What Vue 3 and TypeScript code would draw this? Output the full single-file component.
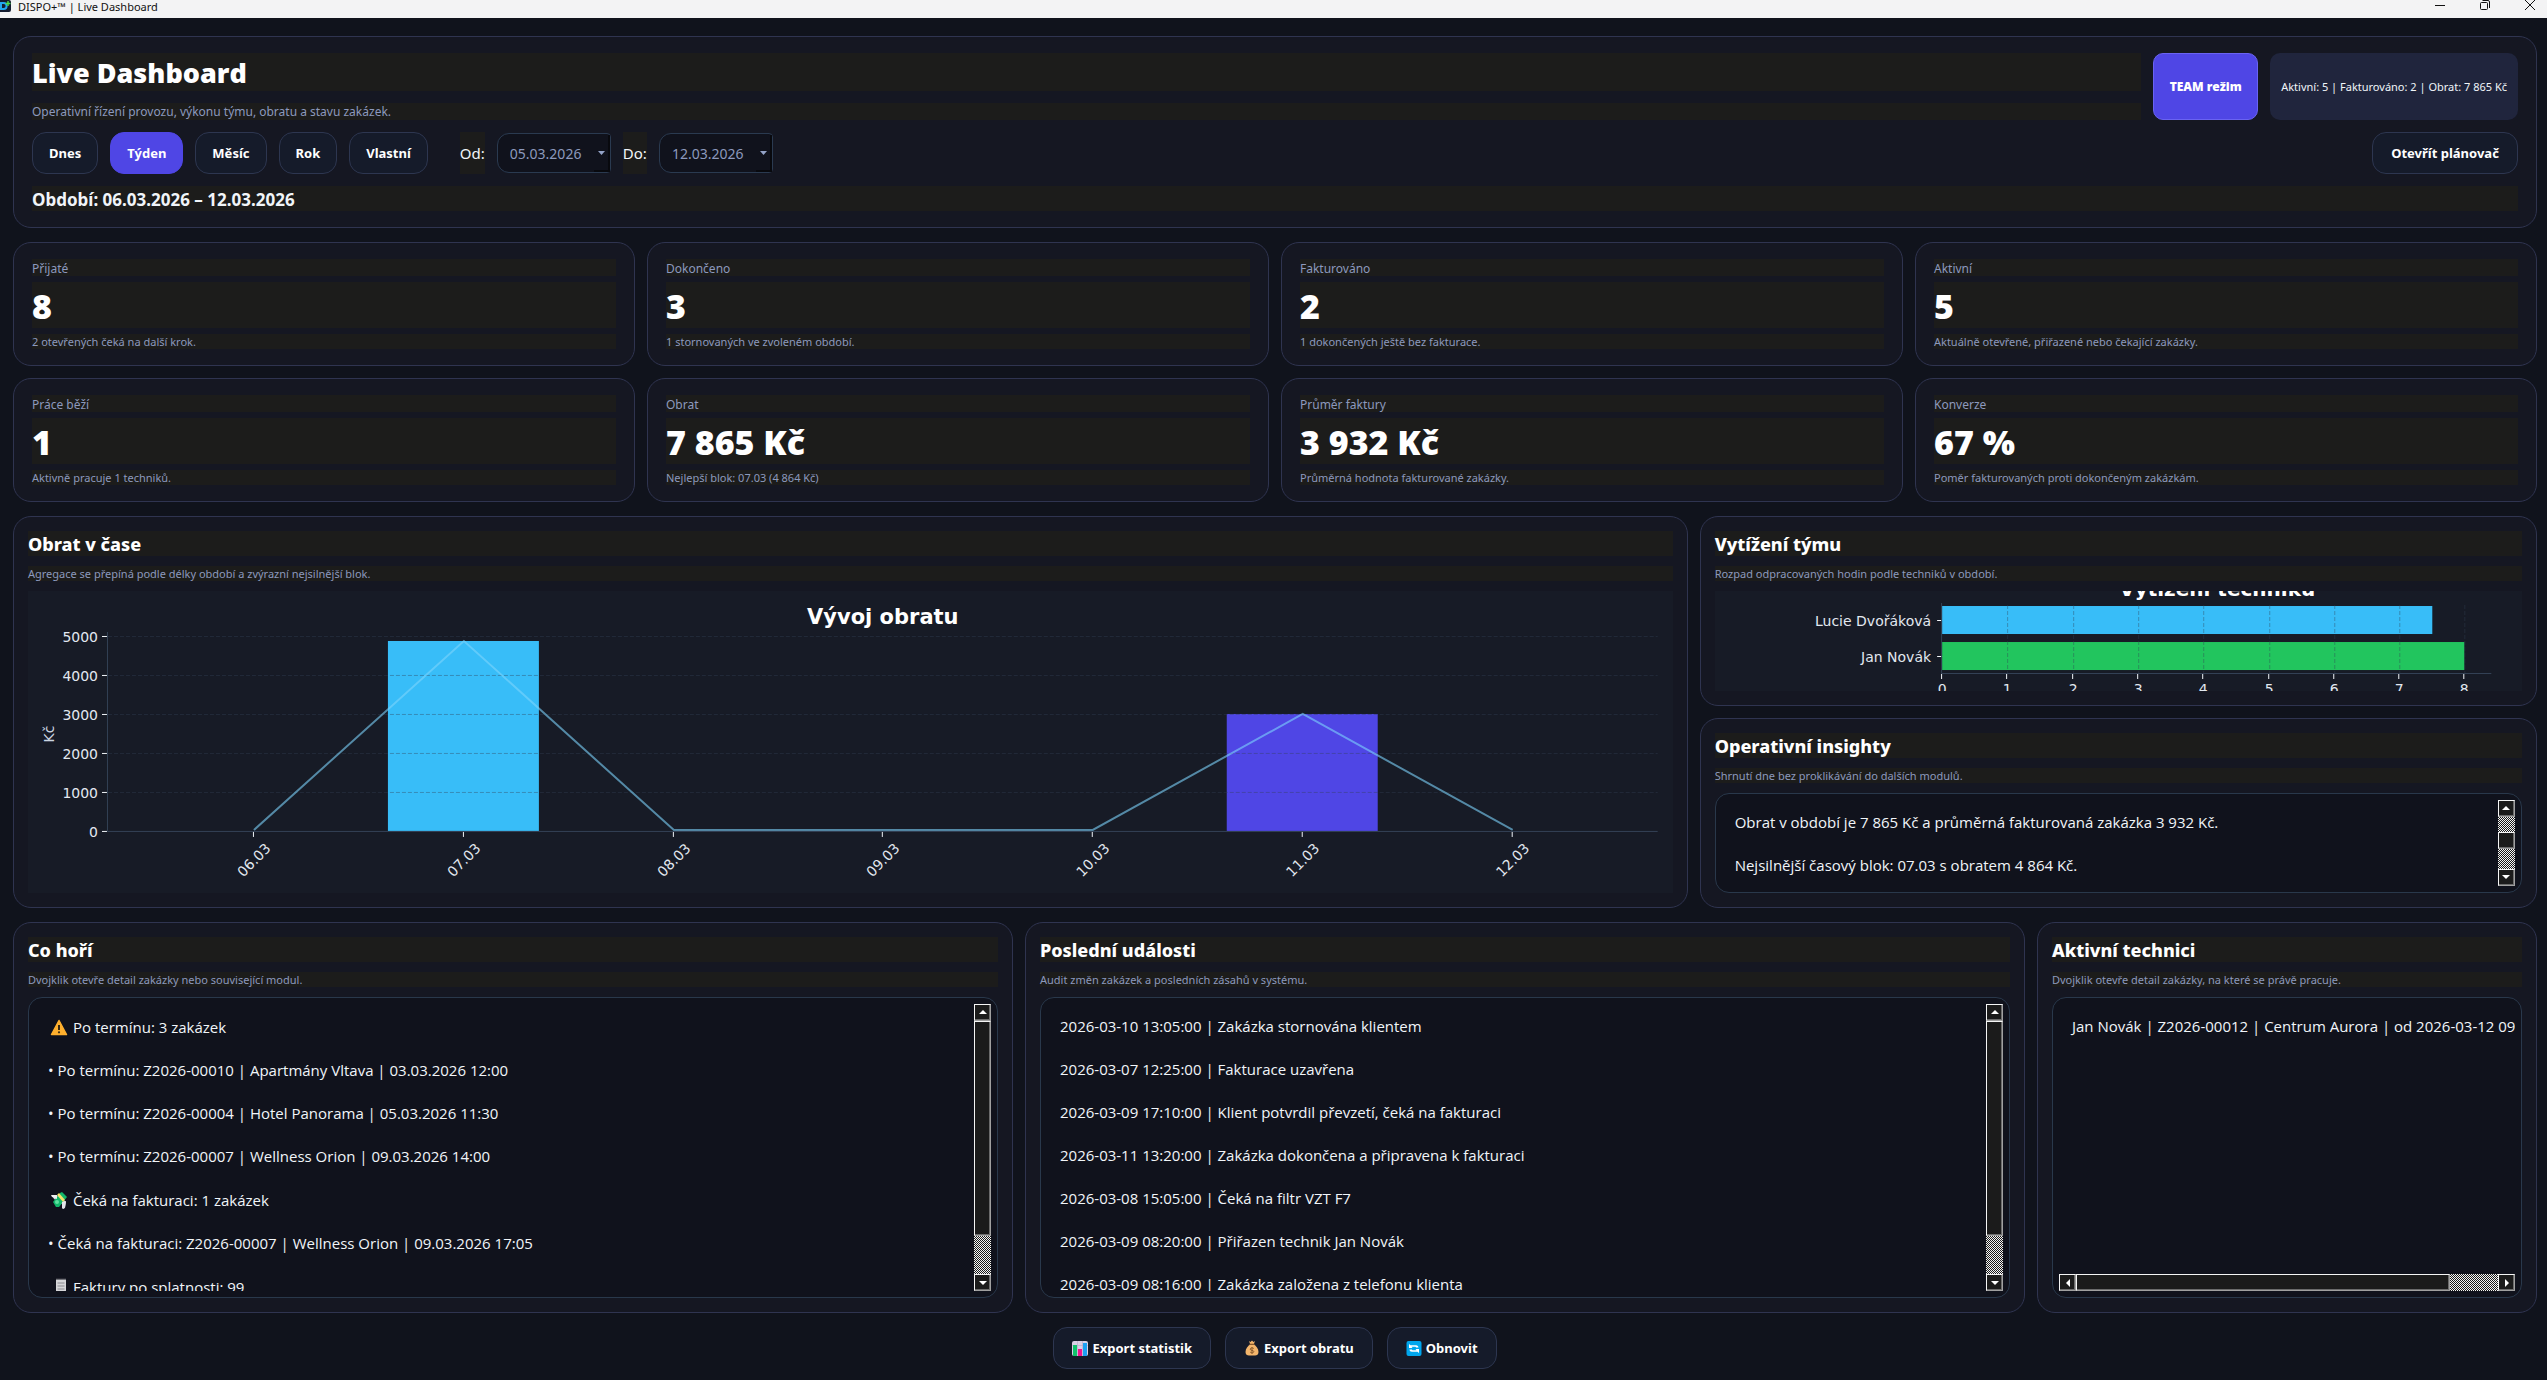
<script setup lang="ts">
import { ref } from 'vue'

interface Kpi {
  label: string
  value: string
  note: string
}

interface FireItem {
  icon?: 'warning' | 'money' | 'receipt'
  text: string
}

const ranges = ['Dnes', 'Týden', 'Měsíc', 'Rok', 'Vlastní']
const activeRange = ref('Týden')
const dateFrom = ref('05.03.2026')
const dateTo = ref('12.03.2026')

const kpis: Kpi[] = [
  { label: 'Přijaté', value: '8', note: '2 otevřených čeká na další krok.' },
  { label: 'Dokončeno', value: '3', note: '1 stornovaných ve zvoleném období.' },
  { label: 'Fakturováno', value: '2', note: '1 dokončených ještě bez fakturace.' },
  { label: 'Aktivní', value: '5', note: 'Aktuálně otevřené, přiřazené nebo čekající zakázky.' },
  { label: 'Práce běží', value: '1', note: 'Aktivně pracuje 1 techniků.' },
  { label: 'Obrat', value: '7 865 Kč', note: 'Nejlepší blok: 07.03 (4 864 Kč)' },
  { label: 'Průměr faktury', value: '3 932 Kč', note: 'Průměrná hodnota fakturované zakázky.' },
  { label: 'Konverze', value: '67 %', note: 'Poměr fakturovaných proti dokončeným zakázkám.' },
]

const insights = [
  'Obrat v období je 7 865 Kč a průměrná fakturovaná zakázka 3 932 Kč.',
  'Nejsilnější časový blok: 07.03 s obratem 4 864 Kč.',
]

const fires: FireItem[] = [
  { icon: 'warning', text: 'Po termínu: 3 zakázek' },
  { text: '• Po termínu: Z2026-00010 | Apartmány Vltava | 03.03.2026 12:00' },
  { text: '• Po termínu: Z2026-00004 | Hotel Panorama | 05.03.2026 11:30' },
  { text: '• Po termínu: Z2026-00007 | Wellness Orion | 09.03.2026 14:00' },
  { icon: 'money', text: 'Čeká na fakturaci: 1 zakázek' },
  { text: '• Čeká na fakturaci: Z2026-00007 | Wellness Orion | 09.03.2026 17:05' },
  { icon: 'receipt', text: 'Faktury po splatnosti: 99' },
]

const events = [
  '2026-03-10 13:05:00 | Zakázka stornována klientem',
  '2026-03-07 12:25:00 | Fakturace uzavřena',
  '2026-03-09 17:10:00 | Klient potvrdil převzetí, čeká na fakturaci',
  '2026-03-11 13:20:00 | Zakázka dokončena a připravena k fakturaci',
  '2026-03-08 15:05:00 | Čeká na filtr VZT F7',
  '2026-03-09 08:20:00 | Přiřazen technik Jan Novák',
  '2026-03-09 08:16:00 | Zakázka založena z telefonu klienta',
]

const technicians = ['Jan Novák | Z2026-00012 | Centrum Aurora | od 2026-03-12 09:05']

// Revenue chart: 39 units of height per 1000 Kč, 210 units per day.
const revenue = [
  { day: '06.03', value: 0, color: '#4f46e5' },
  { day: '07.03', value: 4864, color: '#38bdf8' },
  { day: '08.03', value: 0, color: '#4f46e5' },
  { day: '09.03', value: 0, color: '#4f46e5' },
  { day: '10.03', value: 0, color: '#4f46e5' },
  { day: '11.03', value: 3001, color: '#4f46e5' },
  { day: '12.03', value: 0, color: '#4f46e5' },
]
const yTicks = [0, 1000, 2000, 3000, 4000, 5000]
const dayX = (i: number) => Math.round(226 + i * 209.8)
const moneyY = (v: number) => Math.round(240 - v * 0.039)
const revenueLine = revenue.map((r, i) => `${dayX(i)},${moneyY(r.value) - (r.value ? 0 : 1)}`).join(' ')

// Team chart: hours on the horizontal axis.
const hourX = (h: number) => Math.round(227 + h * 65.3)
const team = [
  { name: 'Lucie Dvořáková', hours: 7.5, y: 15, color: '#38bdf8' },
  { name: 'Jan Novák', hours: 8, y: 51, color: '#22c55e' },
]
const hourTicks = [0, 1, 2, 3, 4, 5, 6, 7, 8]
</script>

<template>
  <div class="window">
    <header class="titlebar">
      <svg class="app-icon" width="11" height="13" viewBox="0 0 11 13" aria-hidden="true">
        <path d="M0 0h9a2 2 0 0 1 2 2v8a2 2 0 0 1-2 2H0z" fill="#141c30" />
        <path d="M1 3h2.600a3 3 0 0 1 0 6H1z" fill="none" stroke="#22a7f0" stroke-width="2" />
        <path d="M8 1v5M5.500 3.500h5" stroke="#4ade4a" stroke-width="1.400" />
      </svg>
      <span class="app-name">DISPO+™ | Live Dashboard</span>
      <div class="window-controls">
        <button type="button" aria-label="Minimalizovat">
          <svg width="12" height="12" viewBox="0 0 12 12"><path d="M1 5.500h10" stroke="#111" /></svg>
        </button>
        <button type="button" aria-label="Obnovit okno">
          <svg width="12" height="12" viewBox="0 0 12 12" fill="none" stroke="#111">
            <rect x="1.500" y="2.500" width="7" height="7" rx="1" />
            <path d="M3.500 0.500H9a1.500 1.500 0 0 1 1.500 1.500v6" />
          </svg>
        </button>
        <button type="button" aria-label="Zavřít">
          <svg width="12" height="12" viewBox="0 0 12 12"><path d="M1 0l10 10M11 0L1 10" stroke="#111" /></svg>
        </button>
      </div>
    </header>

    <main class="page">
      <section class="card hero">
        <div class="hero-top">
          <div class="hero-titles">
            <h1 class="strip">Live Dashboard</h1>
            <p class="strip hero-sub">Operativní řízení provozu, výkonu týmu, obratu a stavu zakázek.</p>
          </div>
          <button type="button" class="team-btn">TEAM režim</button>
          <div class="pill">Aktivní: 5 | Fakturováno: 2 | Obrat: 7 865 Kč</div>
        </div>
        <div class="hero-row">
          <button
            v-for="r in ranges"
            :key="r"
            type="button"
            class="btn range"
            :class="{ active: r === activeRange }"
            @click="activeRange = r"
          >{{ r }}</button>
          <label class="strip date-label first" for="date-from">Od:</label>
          <span class="combo">
            <select id="date-from" v-model="dateFrom"><option>05.03.2026</option></select>
            <svg width="9" height="5" viewBox="0 0 9 5" aria-hidden="true"><path d="M1 0h7L4.500 4z" fill="#94a3c8" /></svg>
          </span>
          <label class="strip date-label" for="date-to">Do:</label>
          <span class="combo">
            <select id="date-to" v-model="dateTo"><option>12.03.2026</option></select>
            <svg width="9" height="5" viewBox="0 0 9 5" aria-hidden="true"><path d="M1 0h7L4.500 4z" fill="#94a3c8" /></svg>
          </span>
          <button type="button" class="btn planner">Otevřít plánovač</button>
        </div>
        <p class="strip period">Období: 06.03.2026 – 12.03.2026</p>
      </section>

      <section class="kpis">
        <article v-for="k in kpis" :key="k.label" class="card kpi">
          <h2 class="strip kpi-label">{{ k.label }}</h2>
          <p class="strip kpi-value">{{ k.value }}</p>
          <p class="strip kpi-note">{{ k.note }}</p>
        </article>
      </section>

      <section class="charts">
        <article class="card panel">
          <h2 class="strip panel-title">Obrat v čase</h2>
          <p class="strip panel-sub">Agregace se přepíná podle délky období a zvýrazní nejsilnější blok.</p>
          <div class="plot">
            <svg viewBox="0 0 1645 300" preserveAspectRatio="xMinYMin meet" role="img" aria-label="Vývoj obratu">
              <text class="plot-title large" x="855" y="33" text-anchor="middle">Vývoj obratu</text>
              <text class="axis-label" x="21" y="143" text-anchor="middle" dominant-baseline="central" transform="rotate(-90 21 143)">Kč</text>
              <template v-for="(r, i) in revenue" :key="r.day">
                <rect
                  v-if="r.value"
                  :x="dayX(i) - 76"
                  :y="moneyY(r.value)"
                  width="151"
                  :height="240 - moneyY(r.value)"
                  :fill="r.color"
                />
              </template>
              <g v-for="t in yTicks" :key="t">
                <path v-if="t" class="grid" :d="`M80 ${moneyY(t) + 0.5}H1630`" />
                <path class="tick" :d="`M74 ${moneyY(t) + 0.5}h5`" />
                <text class="tick-label" x="70" :y="moneyY(t) + 6" text-anchor="end">{{ t }}</text>
              </g>
              <polyline :points="revenueLine" class="trend" />
              <path class="axis" d="M79.500 41V240.500H1630" />
              <g v-for="(r, i) in revenue" :key="r.day">
                <path class="tick" :d="`M${dayX(i) - 0.5} 241v5`" />
                <text
                  class="tick-label"
                  :x="dayX(i)"
                  y="269"
                  text-anchor="middle"
                  dominant-baseline="central"
                  :transform="`rotate(-45 ${dayX(i)} 269)`"
                >{{ r.day }}</text>
              </g>
            </svg>
          </div>
        </article>

        <div class="side">
          <article class="card panel">
            <h2 class="strip panel-title">Vytížení týmu</h2>
            <p class="strip panel-sub">Rozpad odpracovaných hodin podle techniků v období.</p>
            <div class="plot">
              <svg viewBox="0 0 807 98" preserveAspectRatio="xMinYMin meet" role="img" aria-label="Vytížení techniků">
                <text class="plot-title" x="502" y="5" text-anchor="middle">Vytížení techniků</text>
                <g v-for="m in team" :key="m.name">
                  <rect x="227" :y="m.y" :width="hourX(m.hours) - 227" height="28" :fill="m.color" />
                  <path class="tick" :d="`M222 ${m.y + 14.5}h5`" />
                  <text class="tick-label" x="216" :y="m.y + 20" text-anchor="end">{{ m.name }}</text>
                </g>
                <g v-for="h in hourTicks" :key="h">
                  <path v-if="h" class="grid" :d="`M${hourX(h) + 0.5} 14V82`" />
                  <path class="tick" :d="`M${hourX(h) - 0.5} 83v5`" />
                  <text class="tick-label" :x="hourX(h)" y="103" text-anchor="middle">{{ h }}</text>
                </g>
                <path class="axis" d="M226.500 12V82.500H776" />
              </svg>
            </div>
          </article>

          <article class="card panel">
            <h2 class="strip panel-title">Operativní insighty</h2>
            <p class="strip panel-sub">Shrnutí dne bez proklikávání do dalších modulů.</p>
            <div class="list">
              <ul>
                <li v-for="t in insights" :key="t">{{ t }}</li>
              </ul>
              <div class="scroll">
                <button type="button" class="arrow" aria-label="Nahoru"><i class="up"></i></button>
                <span class="track insights-lead"></span>
                <span class="thumb insights-thumb"></span>
                <span class="track grow"></span>
                <button type="button" class="arrow" aria-label="Dolů"><i class="down"></i></button>
              </div>
            </div>
          </article>
        </div>
      </section>

      <section class="lists">
        <article class="card panel">
          <h2 class="strip panel-title">Co hoří</h2>
          <p class="strip panel-sub">Dvojklik otevře detail zakázky nebo související modul.</p>
          <div class="list">
            <ul>
              <li v-for="f in fires" :key="f.text" :class="{ flagged: f.icon }">
                <svg v-if="f.icon === 'warning'" width="20" height="18" viewBox="0 0 20 18" aria-hidden="true">
                  <path d="M10 2.500L17.500 16.500h-15z" fill="#ffb02e" stroke="#ffb02e" stroke-width="1.500" stroke-linejoin="round" />
                  <path d="M10 7v5" stroke="#3a2a10" stroke-width="2" />
                  <circle cx="10" cy="14.300" r="1.100" fill="#3a2a10" />
                </svg>
                <svg v-else-if="f.icon === 'money'" width="20" height="18" viewBox="0 0 20 18" aria-hidden="true">
                  <path d="M3 4l6 1 8 6-1 6-2 1-1-5-8-5z" fill="#d8d8de" />
                  <path d="M4 11l7-9 2-1 5 5-8 10-3 0z" fill="#12b76a" />
                  <path d="M8 4l6 7 2-2-6-7z" fill="#f5e06a" />
                  <circle cx="8" cy="11" r="2" fill="#5fe0a0" />
                  <path d="M2 4l6 0v4l-5-2z" fill="#efeff2" />
                  <path d="M13 11l4-1-1 6-2 2-1-1z" fill="#e4e4ea" />
                </svg>
                <svg v-else-if="f.icon === 'receipt'" width="20" height="18" viewBox="0 0 20 18" aria-hidden="true">
                  <path d="M7 1.500h10V18H7z" fill="#d5d5d8" />
                  <path d="M7.500 1h9.500" stroke="#77777c" stroke-dasharray="1 1" />
                  <path d="M8.500 5h7M8.500 8h7M8.500 11h7M8.500 14h7" stroke="#8a8a90" />
                </svg>
                {{ f.text }}
              </li>
            </ul>
            <div class="scroll">
              <button type="button" class="arrow" aria-label="Nahoru"><i class="up"></i></button>
              <span class="thumb grow"></span>
              <span class="track tall-tail"></span>
              <button type="button" class="arrow" aria-label="Dolů"><i class="down"></i></button>
            </div>
          </div>
        </article>

        <article class="card panel">
          <h2 class="strip panel-title">Poslední události</h2>
          <p class="strip panel-sub">Audit změn zakázek a posledních zásahů v systému.</p>
          <div class="list">
            <ul>
              <li v-for="e in events" :key="e">{{ e }}</li>
            </ul>
            <div class="scroll">
              <button type="button" class="arrow" aria-label="Nahoru"><i class="up"></i></button>
              <span class="thumb grow"></span>
              <span class="track tall-tail"></span>
              <button type="button" class="arrow" aria-label="Dolů"><i class="down"></i></button>
            </div>
          </div>
        </article>

        <article class="card panel">
          <h2 class="strip panel-title">Aktivní technici</h2>
          <p class="strip panel-sub">Dvojklik otevře detail zakázky, na které se právě pracuje.</p>
          <div class="list stacked">
            <ul>
              <li v-for="t in technicians" :key="t">{{ t }}</li>
            </ul>
            <div class="scroll horizontal">
              <button type="button" class="arrow" aria-label="Vlevo"><i class="left"></i></button>
              <span class="thumb grow"></span>
              <span class="track wide-tail"></span>
              <button type="button" class="arrow" aria-label="Vpravo"><i class="right"></i></button>
            </div>
          </div>
        </article>
      </section>

      <footer class="actions">
        <button type="button" class="btn action">
          <svg width="16" height="16" viewBox="0 0 16 16" aria-hidden="true">
            <rect x="0" y="1" width="16" height="15" rx="2" fill="#d9d0e6" />
            <path d="M5.500 1v15M10.500 1v15M0 5.500h16" stroke="#b5a8c8" stroke-width="0.600" />
            <path d="M1 5h4v11H1z" fill="#10c26c" />
            <path d="M6 9h4v7H6z" fill="#f0148c" />
            <path d="M11 3h4v13h-4z" fill="#1ca0f2" />
          </svg>
          Export statistik
        </button>
        <button type="button" class="btn action">
          <svg width="16" height="16" viewBox="0 0 16 16" aria-hidden="true">
            <path d="M5 1l1.500 1L8 0.500 9.500 2 11 1 9.800 4.200H6.200z" fill="#f3b56b" />
            <path d="M6 4.500h4c2 1.500 4.500 4 4.500 7.500 0 2.500-1.500 3.500-3.500 3.500H5c-2 0-3.500-1-3.500-3.500C1.500 8.500 4 6 6 4.500z" fill="#f3b56b" />
            <path d="M5.500 4.300h5" stroke="#8a5a2b" stroke-width="1.200" />
            <path d="M9.800 8.500c-1-1-3.600-.8-3.600.7 0 1.600 3.600.8 3.600 2.400 0 1.400-2.600 1.500-3.600.5M8 7v7" fill="none" stroke="#8a5a2b" />
          </svg>
          Export obratu
        </button>
        <button type="button" class="btn action">
          <svg width="16" height="16" viewBox="0 0 16 16" aria-hidden="true">
            <rect x="0.500" y="1" width="15" height="15" rx="2" fill="#00a6ed" />
            <path d="M3 6.500V4l1.500 1.200H10c1.500 0 2.500 1 2.500 2.300H10c0-.6-.4-.8-1-.8H5.500L6.500 8H3z" fill="#fff" />
            <path d="M13 10.500V13l-1.500-1.200H6c-1.500 0-2.500-1-2.500-2.300H6c0 .6.400.8 1 .8h3.500L9.500 9H13z" fill="#fff" />
          </svg>
          Obnovit
        </button>
      </footer>
    </main>
  </div>
</template>

<style>
body {
  margin: 0;
  background: #10131c;
}
</style>

<style scoped>
.window {
  display: flex;
  flex-direction: column;
  min-height: 100vh;
  background: #10131c;
  color: #f1f5f9;
  font-family: "Noto Sans", "Open Sans", sans-serif;
  font-size: 14px;
}

.window *,
.window *::before {
  box-sizing: border-box;
}

h1,
h2,
p,
ul {
  margin: 0;
  padding: 0;
}

button,
select {
  font-family: inherit;
  cursor: pointer;
}

h1,
.team-btn,
.kpi-value,
.list {
  font-family: "Open Sans", "Noto Sans", sans-serif;
}

.titlebar {
  display: flex;
  align-items: flex-start;
  height: 18px;
  background: #f3f3f4;
  color: #111;
  overflow: hidden;
}

.app-name {
  margin-left: 7px;
  font-size: 11px;
  line-height: 14px;
}

.window-controls {
  display: flex;
  gap: 33px;
  margin: 0 11px 0 auto;
}

.window-controls button {
  display: flex;
  padding: 0;
  border: 0;
  background: none;
}

.page {
  display: flex;
  flex: 1;
  flex-direction: column;
  gap: 14px;
  padding: 18px 10px 11px 13px;
}

.card {
  border: 1px solid #2f3450;
  border-radius: 18px;
  background: #151722;
}

.strip {
  background: #1c1c1b;
}

.hero {
  display: flex;
  flex-direction: column;
  gap: 12px;
  padding: 16px 18px;
}

.hero-top {
  display: flex;
  gap: 12px;
}

.hero-titles {
  display: flex;
  flex: 1;
  flex-direction: column;
  gap: 12px;
}

h1 {
  padding-top: 2px;
  font-size: 27px;
  font-weight: 800;
  line-height: 36px;
  color: #fff;
}

.hero-sub {
  padding-top: 1px;
  font-size: 12px;
  line-height: 16px;
  color: #8c99bd;
}

.team-btn {
  width: 105px;
  padding: 0;
  border: 1px solid #6a63f2;
  border-radius: 10px;
  background: #4f46e5;
  color: #fff;
  font-size: 12px;
  font-weight: 800;
}

.pill {
  display: flex;
  align-items: center;
  padding: 0 11px;
  border-radius: 10px;
  background: #20253d;
  font-size: 11px;
}

.hero-row {
  display: flex;
  gap: 12px;
  height: 42px;
}

.btn {
  border: 1px solid #2d3650;
  border-radius: 14px;
  background: #151b2a;
  color: #fff;
  font-size: 13px;
  font-weight: 700;
}

.range {
  padding: 0 16px;
}

.range.active {
  border-color: #4f46e5;
  background: #4f46e5;
}

.date-label {
  font-size: 15px;
  line-height: 42px;
}

.date-label.first {
  margin-left: 20px;
}

.combo {
  position: relative;
  display: flex;
  width: 114px;
  height: 40px;
  margin-top: 1px;
}

.combo select {
  width: 100%;
  padding: 0 12px;
  border: 1px solid #2a3a50;
  border-radius: 12px 4px 4px 12px;
  background: #10121c;
  color: #8c99bd;
  font-size: 14px;
  appearance: none;
}

.combo::before {
  content: "";
  position: absolute;
  top: 2px;
  right: 1px;
  width: 16px;
  height: 37px;
  border-right: 2px solid #08090e;
  border-bottom: 2px solid #08090e;
  pointer-events: none;
}

.combo svg {
  position: absolute;
  top: 18px;
  right: 5px;
  pointer-events: none;
}

.planner {
  width: 146px;
  margin-left: auto;
  padding: 0;
}

.period {
  padding-top: 2px;
  font-size: 17px;
  font-weight: 700;
  line-height: 23px;
}

.kpis {
  display: grid;
  grid-template-columns: repeat(4, 1fr);
  gap: 12px;
}

.kpi {
  display: flex;
  flex-direction: column;
  gap: 6px;
  padding: 16px 18px;
}

.kpi-label {
  padding-top: 2px;
  font-size: 12px;
  font-weight: 400;
  line-height: 15px;
  color: #8c99bd;
}

.kpi-value {
  padding-top: 2px;
  font-size: 34px;
  font-weight: 800;
  line-height: 44px;
  color: #fff;
}

.kpi-note {
  font-size: 11px;
  line-height: 15px;
  color: #8c99bd;
}

.charts,
.lists {
  display: grid;
  flex: 1 1 0;
  grid-template-rows: minmax(0, 1fr);
  gap: 12px;
  min-height: 380px;
}

.charts {
  grid-template-columns: 2fr 1fr;
}

.side {
  display: grid;
  grid-template-rows: minmax(0, 1fr) minmax(0, 1fr);
  gap: 12px;
}

.lists {
  grid-template-columns: 2fr 2fr 1fr;
}

.panel {
  display: flex;
  flex-direction: column;
  gap: 10px;
  min-width: 0;
  min-height: 0;
  padding: 14px;
}

.panel-title {
  padding-top: 2px;
  font-size: 18px;
  font-weight: 800;
  line-height: 23px;
  color: #fff;
}

.panel-sub {
  font-size: 11px;
  line-height: 15px;
  color: #8c99bd;
}

.plot {
  display: flex;
  flex: 1 1 0;
  min-height: 0;
  overflow: hidden;
  background: #171b26;
}

.plot svg {
  flex: 1;
  width: 100%;
  min-height: 0;
  font-family: "DejaVu Sans", sans-serif;
}

.plot-title {
  font-size: 20px;
  font-weight: 700;
  fill: #fff;
}

.plot-title.large {
  font-size: 21px;
}

.tick-label {
  font-size: 14px;
  fill: #e2e8f0;
}

.axis-label {
  font-size: 14px;
  fill: #cbd5e1;
}

.tick {
  stroke: #f1f5f9;
}

.axis {
  fill: none;
  stroke: #334155;
}

.grid {
  stroke: #334155;
  stroke-opacity: 0.4;
  stroke-dasharray: 4 2;
}

.trend {
  fill: none;
  stroke: #7dd3fc;
  stroke-opacity: 0.6;
  stroke-width: 2;
}

.list {
  display: flex;
  flex: 1 1 0;
  min-height: 0;
  padding: 6px;
  border: 1px solid #29384b;
  border-radius: 14px;
  background: #10121c;
}

.list.stacked {
  flex-direction: column;
}

.list ul {
  flex: 1 1 0;
  min-width: 0;
  min-height: 0;
  padding: 1px 0 0 13px;
  overflow: hidden;
  list-style: none;
}

.list li {
  display: flex;
  align-items: center;
  height: 43px;
  font-size: 15px;
  white-space: nowrap;
}

.list li.flagged {
  height: 44px;
}

.list li svg {
  margin: 0 4px 0 1px;
}

.scroll {
  display: flex;
  flex-direction: column;
  width: 17px;
}

.scroll.horizontal {
  flex-direction: row;
  width: 100%;
  height: 17px;
}

.arrow,
.thumb {
  border: 1px solid;
  border-color: #f5f5f5 #a0a0a0 #a0a0a0 #f5f5f5;
  border-radius: 0;
  background: #1b1b1b;
  box-shadow: inset -1px -1px 0 #6b6b6b;
}

.arrow {
  display: flex;
  flex: none;
  align-items: center;
  justify-content: center;
  width: 17px;
  height: 17px;
  padding: 0;
}

.arrow i {
  border: 4px solid transparent;
}

.arrow .up {
  border-top-width: 0;
  border-bottom-color: #fff;
}

.arrow .down {
  border-top-color: #fff;
  border-bottom-width: 0;
}

.arrow .left {
  border-right-color: #fff;
  border-left-width: 0;
}

.arrow .right {
  border-right-width: 0;
  border-left-color: #fff;
}

.track {
  background: repeating-conic-gradient(#f5f5f5 0 25%, #1b1b1b 0 50%) 0 0 / 2px 2px;
}

.grow {
  flex: 1;
}

.insights-lead {
  height: 15px;
}

.insights-thumb {
  height: 17px;
}

.tall-tail {
  height: 38px;
}

.wide-tail {
  width: 48px;
}

.actions {
  display: flex;
  justify-content: center;
  gap: 14px;
}

.action {
  display: flex;
  align-items: center;
  gap: 4px;
  height: 42px;
  padding: 0 18px;
}
</style>
